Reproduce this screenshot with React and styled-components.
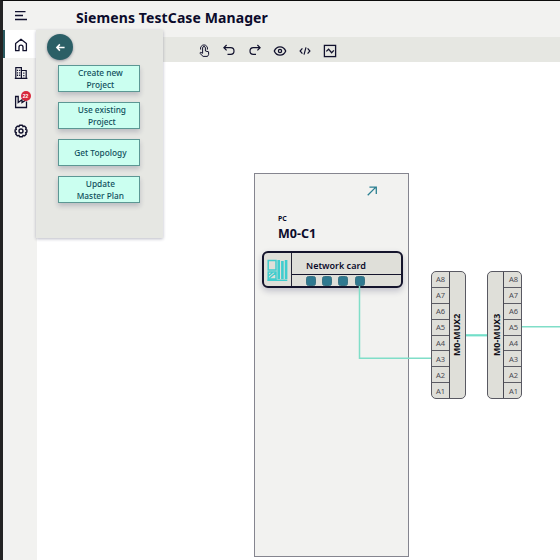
import React from "react";
import styled, { createGlobalStyle } from "styled-components";

const GlobalStyle = createGlobalStyle`
  * { box-sizing: border-box; }
  html, body { margin: 0; padding: 0; overflow: hidden; }
  body { font-family: "Noto Sans", "Open Sans", sans-serif; color: #0b0b2b; background: #fff; }
`;

const Frame = styled.div`
  display: flex;
  width: 560px;
  height: 560px;
  overflow: hidden;
  background: #fff;
  border-top: 1px solid #0c0c0c;
  border-left: 3px solid #232323;
`;

const Sidebar = styled.nav`
  display: flex;
  flex-direction: column;
  flex: none;
  width: 34px;
  background: #f2f2f0;
`;

const NavItem = styled.button`
  display: flex;
  align-items: center;
  justify-content: center;
  flex: none;
  width: 100%;
  height: 28.7px;
  padding: 1px 1px 0 0;
  border: 0;
  border-left: 2px solid ${(p) => (p.$active ? "#2b5a60" : "transparent")};
  background: ${(p) => (p.$active ? "#fff" : "transparent")};
`;

const IconWrap = styled.span`
  position: relative;
  display: flex;
`;

const Badge = styled.span`
  position: absolute;
  top: -4px;
  left: 7px;
  width: 10px;
  height: 10px;
  border-radius: 50%;
  background: #d8283c;
  color: #fff;
  font-size: 5px;
  font-weight: 700;
  line-height: 10px;
  text-align: center;
`;

const Main = styled.div`
  position: relative;
  display: flex;
  flex-direction: column;
  flex: 1;
  min-width: 0;
`;

const Header = styled.header`
  flex: none;
  height: 36px;
  padding: 7px 0 0 39px;
  background: #f2f2f0;
`;

const Title = styled.h1`
  margin: 0;
  font-size: 14px;
  line-height: 20px;
  font-weight: 700;
  white-space: nowrap;
  letter-spacing: 0.1px;
`;

const Toolbar = styled.div`
  display: flex;
  align-items: center;
  flex: none;
  gap: 11.3px;
  height: 25px;
  padding: 2px 0 0 160px;
  background: #e6e7e2;
`;

const Tool = styled.button`
  display: flex;
  padding: 0;
  border: 0;
  background: none;
`;

const Canvas = styled.main`
  position: relative;
  flex: 1;
  overflow: hidden;
  background: #fff;
`;

const Panel = styled.aside`
  position: absolute;
  top: 29px;
  left: -1px;
  z-index: 3;
  display: flex;
  flex-direction: column;
  width: 127px;
  height: 208px;
  padding: 4px 0 0 11.4px;
  background: #e6e7e3;
  box-shadow: 0 1px 3px rgba(40, 40, 75, 0.32);
`;

const BackButton = styled.button`
  display: flex;
  align-items: center;
  justify-content: center;
  width: 26px;
  height: 26px;
  padding: 0;
  border: 0;
  border-radius: 50%;
  background: #2b5f66;
  box-shadow: 0 1px 3px rgba(20, 20, 50, 0.4);
`;

const Actions = styled.div`
  display: flex;
  flex-direction: column;
  gap: 10px;
  padding: 5px 0 0 11px;
`;

const Action = styled.button`
  width: 82px;
  height: 27px;
  padding: ${(p) => (p.$indent ? "0 0 0 5px" : "0 0 0 2px")};
  border: 1px solid #5c9794;
  background: #cbfff0;
  color: #0f4f5c;
  box-shadow: 0 3px 5px rgba(20, 20, 60, 0.2);
  font: 500 8.3px/12px "Noto Sans", sans-serif;
  text-align: center;
  white-space: pre-line;
`;

const PcNode = styled.section`
  position: absolute;
  left: 216.5px;
  top: 111px;
  width: 155px;
  height: 384px;
  padding: 11px 6px 0 7px;
  border: 1px solid #85858f;
  background: #f2f2f0;
`;

const PcHeader = styled.div`
  display: flex;
  justify-content: flex-end;
  padding-right: 24px;
`;

const PcKind = styled.div`
  margin: 17px 0 0 16.5px;
  font-size: 7px;
  line-height: 10px;
  font-weight: 700;
`;

const PcName = styled.div`
  margin: 1px 0 0 16.5px;
  font-size: 12.5px;
  line-height: 17px;
  font-weight: 700;
`;

const Card = styled.div`
  display: flex;
  width: 141px;
  height: 37px;
  margin-top: 9px;
  border: 2px solid #14142c;
  border-radius: 6px;
  background: #dfdfd9;
  box-shadow: 0 3px 6px rgba(30, 30, 75, 0.23);
  overflow: hidden;
`;

const CardIcon = styled.div`
  display: flex;
  align-items: center;
  justify-content: center;
  flex: none;
  width: 28px;
  border-right: 1px solid #252536;
`;

const CardBody = styled.div`
  flex: 1;
`;

const CardLabel = styled.div`
  height: 22px;
  padding: 5px 0 0 14.5px;
  border-bottom: 1px solid #14142c;
  font-size: 9px;
  line-height: 15px;
  font-weight: 600;
  white-space: nowrap;
`;

const Ports = styled.div`
  display: flex;
  gap: 6.4px;
  padding: 0.5px 0 0 14px;
`;

const Port = styled.span`
  width: 10px;
  height: 10px;
  border: 1px solid #3d7484;
  border-radius: 2.5px;
  background: #2f7990;
`;

const Wires = styled.svg`
  position: absolute;
  inset: 0;
  z-index: 1;
`;

const Mux = styled.section`
  position: absolute;
  left: ${(p) => p.$x}px;
  top: 209px;
  display: flex;
  flex-direction: ${(p) => (p.$mirrored ? "row-reverse" : "row")};
  width: 35px;
  height: 128px;
  border: 1px solid #595962;
  border-radius: 5px;
  background: #dfdfd9;
  overflow: hidden;
`;

const MuxPorts = styled.div`
  display: flex;
  flex-direction: column;
  flex: none;
  width: 18px;
  border: 0 solid #494953;
  border-${(p) => (p.$mirrored ? "left" : "right")}-width: 1px;
`;

const MuxPort = styled.div`
  display: flex;
  align-items: center;
  justify-content: center;
  flex: 1;
  padding-left: ${(p) => (p.$mirrored ? 2 : 0)}px;
  font-size: 7.5px;
  line-height: 10px;
  color: #4a4a52;
  & + & { border-top: 1px solid #5c5c64; }
`;

const MuxName = styled.div`
  display: flex;
  align-items: center;
  justify-content: center;
  flex: 1;
  padding-${(p) => (p.$mirrored ? "right" : "left")}: 2px;
  writing-mode: vertical-rl;
  transform: rotate(180deg);
  font-size: 8.9px;
  font-weight: 700;
  line-height: 12px;
  color: #101018;
  white-space: nowrap;
`;

const Icon = ({ w = 14, h = w, box = "0 0 14 14", stroke = "#11112d", sw = 1.3, children }) => (
  <svg width={w} height={h} viewBox={box} fill="none" stroke={stroke} strokeWidth={sw}>
    {children}
  </svg>
);

const MenuIcon = () => (
  <Icon><path d="M1 2.600h10.500M1 6.500h8M1 10.500h12" /></Icon>
);
const HomeIcon = () => (
  <Icon><path d="M1.6 12.7V5.4L7 1.2l5.4 4.2v7.3H9V9.2a2 2 0 0 0-4 0v3.5z" strokeLinejoin="round" /></Icon>
);
const BuildingIcon = () => (
  <Icon sw={1.2}>
    <path d="M1.8 12.2V1.6h5.6v10.600M7.400 4.500h4.800v7.700M.8 12.400h12.600" />
    <path d="M3.500 3.800v7M5.700 3.800v7M9.800 6.500v5" strokeDasharray="1.300 1.100" />
  </Icon>
);
const PlantIcon = () => (
  <Icon><path d="M12.500 6.500v6H1.600V1.500h2.600v6L8 4.800v2.800l4.500-3" /></Icon>
);
const GearIcon = () => (
  <Icon sw={1.400}>
    <path d="M5.500 1.200h3l.5 1.500 1.500-.6 1.800 1.900-.7 1.400 1.300.6v2l-1.300.6.7 1.500-1.800 1.800-1.500-.6-.5 1.500h-3L5 11.300l-1.500.6-1.800-1.800.7-1.500L1.100 8V6l1.300-.6L1.700 4l1.800-1.900 1.500.6z" strokeLinejoin="round" />
    <circle cx="7" cy="7" r="2" />
  </Icon>
);
const TouchIcon = () => (
  <Icon sw={1}>
    <path d="M3.700 5.600a3.500 3.500 0 1 1 6.600 0M5.600 6V3.900a1.400 1.400 0 1 1 2.800 0V7l3.200.8v2.800l-1.100 1.800H6.100L2.800 9.200l.9-.9 1.900 1V6" strokeLinejoin="round" />
  </Icon>
);
const UndoIcon = () => (
  <Icon sw={1.2}><path d="M4.600 1 1.900 3.700l2.700 2.700M2 3.700h6.700a3.200 3.200 0 0 1 0 6.600H5.500" /></Icon>
);
const RedoIcon = () => (
  <Icon sw={1.2}><path d="m9.400 1 2.700 2.700-2.700 2.700M12 3.700H5.300a3.200 3.200 0 0 0 0 6.600H8" /></Icon>
);
const EyeIcon = () => (
  <Icon sw={1.3}>
    <path d="M1.300 7C2.400 4.300 4.500 2.800 7 2.800S11.600 4.300 12.700 7C11.600 9.700 9.500 11.200 7 11.200S2.400 9.700 1.300 7z" />
    <circle cx="7" cy="7" r="1.6" />
  </Icon>
);
const CodeIcon = () => (
  <Icon sw={1.2}><path d="M4.400 4.400 2.100 7l2.300 2.600M9.600 4.400 11.900 7 9.600 9.600M8 3.300 6 10.700" /></Icon>
);
const WaveIcon = () => (
  <Icon sw={1.3}>
    <rect x="1.400" y="1.400" width="11.200" height="11.200" />
    <path d="M3.300 7.400 5.600 5.200l3 3.500 2.300-2.300" />
  </Icon>
);
const BackIcon = () => (
  <Icon w={11} stroke="#fff" sw={2}><path d="M6.200 3 2.400 7l3.800 4M2.800 7h9.400" /></Icon>
);
const OpenIcon = () => (
  <Icon w={12} stroke="#2b7f91" sw={1.500}><path d="M2 12 11.500 2.500M4 2.500h8v8" /></Icon>
);
const DeviceIcon = () => (
  <Icon w={23} h={24} box="0 0 22 24" stroke="#3fcdce" sw={1.500}>
    <path d="M1.700 2.500h7.800v9.500H1.700zM1.700 14h7.800v7H1.700zM2.500 17.500l3.500-3M3 20l6-5M.8 22.300h20" />
    <path d="M12.200 2v19M15.900 3v18M19.600 2v19" strokeWidth="2.600" />
  </Icon>
);

const tools = [TouchIcon, UndoIcon, RedoIcon, EyeIcon, CodeIcon, WaveIcon];
const actions = [
  { label: "Create new\nProject" },
  { label: "Use existing\nProject", indent: true },
  { label: "Get Topology" },
  { label: "Update\nMaster Plan" },
];
const muxPorts = ["A8", "A7", "A6", "A5", "A4", "A3", "A2", "A1"];

const MuxNode = ({ x, name, mirrored }) => (
  <Mux $x={x} $mirrored={mirrored}>
    <MuxPorts $mirrored={mirrored}>
      {muxPorts.map((port) => <MuxPort key={port} $mirrored={mirrored}>{port}</MuxPort>)}
    </MuxPorts>
    <MuxName $mirrored={mirrored}>{name}</MuxName>
  </Mux>
);

export default function App() {
  return (
    <>
      <GlobalStyle />
      <Frame>
        <Sidebar>
          <NavItem><MenuIcon /></NavItem>
          <NavItem $active><HomeIcon /></NavItem>
          <NavItem><BuildingIcon /></NavItem>
          <NavItem><IconWrap><PlantIcon /><Badge>22</Badge></IconWrap></NavItem>
          <NavItem><GearIcon /></NavItem>
        </Sidebar>
        <Main>
          <Header><Title>Siemens TestCase Manager</Title></Header>
          <Toolbar>
            {tools.map((ToolIcon, i) => <Tool key={i}><ToolIcon /></Tool>)}
          </Toolbar>
          <Canvas>
            <PcNode>
              <PcHeader><OpenIcon /></PcHeader>
              <PcKind>PC</PcKind>
              <PcName>M0-C1</PcName>
              <Card>
                <CardIcon><DeviceIcon /></CardIcon>
                <CardBody>
                  <CardLabel>Network card</CardLabel>
                  <Ports><Port /><Port /><Port /><Port /></Ports>
                </CardBody>
              </Card>
            </PcNode>
            <Wires width="523" height="498" fill="none" stroke="#80dec8" strokeWidth="1.500">
              <path d="M322.500 224v72.300H394M485 264.800h38" />
              <path d="M429 273.300h21" stroke="#72dfc9" strokeWidth="2.200" />
            </Wires>
            <MuxNode x={394} name="M0-MUX2" />
            <MuxNode x={450} name="M0-MUX3" mirrored />
          </Canvas>
          <Panel>
            <BackButton><BackIcon /></BackButton>
            <Actions>
              {actions.map(({ label, indent }) => (
                <Action key={label} $indent={indent}>{label}</Action>
              ))}
            </Actions>
          </Panel>
        </Main>
      </Frame>
    </>
  );
}
